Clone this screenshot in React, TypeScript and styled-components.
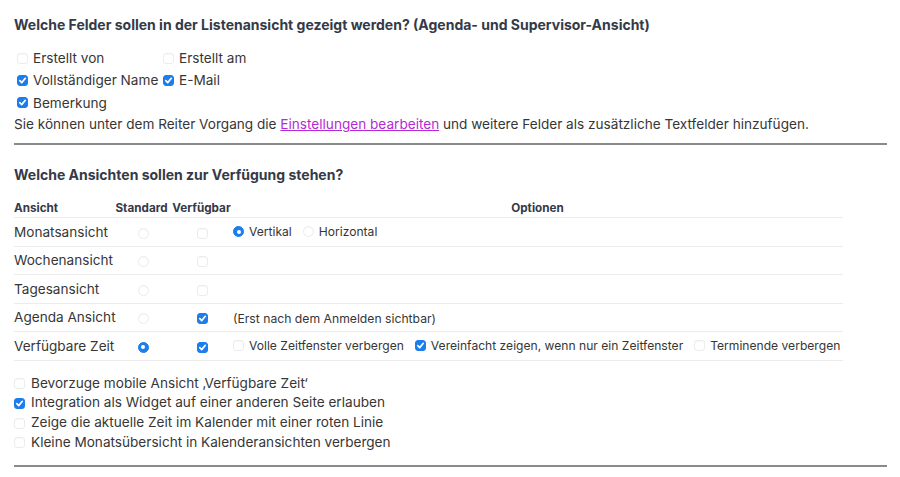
import * as React from 'react';
import styled, { createGlobalStyle } from 'styled-components';

const GlobalStyle = createGlobalStyle`
  html, body {
    margin: 0;
    padding: 0;
    background: #fff;
  }
  body {
    font-family: Inter, 'Liberation Sans', Arial, sans-serif;
    color: #363636;
  }
`;

const Page = styled.div`
  padding: 17px 13px 0 14px;
`;

const Title = styled.h2<{ $spaced?: boolean }>`
  margin: ${(p) => (p.$spaced ? '22px' : '0')} 0 0;
  font-size: 14px;
  line-height: 16px;
  font-weight: 700;
  color: #343a47;
`;

const FieldGrid = styled.div`
  display: grid;
  grid-template-columns: 146px auto;
  justify-content: start;
  margin-top: 14px;
`;

const FieldItem = styled.label`
  display: flex;
  align-items: center;
  font-size: 13.6px;
  line-height: 22.3px;
  white-space: nowrap;
`;

const Hint = styled.p`
  margin: 0;
  font-size: 13.6px;
  line-height: 21.8px;
`;

const Link = styled.a`
  color: #b52ad5;
  text-decoration: underline;
  cursor: pointer;
`;

const Rule = styled.hr`
  margin: 7px 0 0;
  height: 0;
  border: 0;
  border-top: 2px solid #8a8a8a;
`;

const Box = styled.span<{ $checked?: boolean; $round?: boolean; $ml?: number; $mr?: number }>`
  position: relative;
  display: inline-flex;
  align-items: center;
  justify-content: center;
  flex: 0 0 auto;
  box-sizing: border-box;
  width: 11px;
  height: 11px;
  margin: 0 ${(p) => p.$mr ?? 0}px 0 ${(p) => p.$ml ?? 0}px;
  border-radius: ${(p) => (p.$round ? '50%' : '3px')};
  background: ${(p) => (p.$checked ? '#1c7ded' : '#fff')};
  border: 1px solid ${(p) => (p.$checked ? '#1c7ded' : '#ececec')};
  box-shadow: ${(p) => (p.$checked ? 'none' : 'inset 0 1px 1px rgba(0,0,0,0.03)')};
  svg {
    display: block;
  }
  &::after {
    content: '';
    display: ${(p) => (p.$round && p.$checked ? 'block' : 'none')};
    width: 4px;
    height: 4px;
    border-radius: 50%;
    background: #fff;
  }
`;

const Check = ({ on, round, ml, mr }: { on?: boolean; round?: boolean; ml?: number; mr?: number }) => (
  <Box $checked={on} $round={round} $ml={ml} $mr={mr}>
    {on && !round && (
      <svg width='9' height='9' viewBox='0 0 9 9'>
        <polyline points='1.8,4.7 3.7,6.6 7.3,2.3' fill='none' stroke='#fff' strokeWidth='1.7' strokeLinecap='round' strokeLinejoin='round' />
      </svg>
    )}
  </Box>
);

const ViewTable = styled.table`
  margin-top: 16px;
  width: 829px;
  border-collapse: collapse;
  table-layout: fixed;
`;

const HeadCell = styled.th<{ $left?: boolean; $w?: number }>`
  width: ${(p) => (p.$w ? `${p.$w}px` : 'auto')};
  height: 19px;
  padding: 1px 0 0;
  box-sizing: border-box;
  font-size: 11.7px;
  line-height: 16px;
  font-weight: 700;
  color: #343a47;
  text-align: ${(p) => (p.$left ? 'left' : 'center')};
  vertical-align: top;
  border-bottom: 1px solid #ececec;
`;

const Row = styled.tr`
  border-bottom: 1px solid #ececec;
`;

const Cell = styled.td<{ $center?: boolean }>`
  height: 27.5px;
  padding: 0;
  font-size: 13.6px;
  vertical-align: middle;
  text-align: ${(p) => (p.$center ? 'center' : 'left')};
  white-space: nowrap;
  > span {
    vertical-align: middle;
  }
`;

const OptionsCell = styled.td`
  padding: 0;
  vertical-align: middle;
  white-space: nowrap;
`;

const Options = styled.div`
  display: flex;
  align-items: center;
`;

const Option = styled.label`
  display: inline-flex;
  align-items: center;
  margin-right: 10px;
  font-size: 12.1px;
  line-height: 14px;
`;

const Note = styled.span`
  padding-left: 1px;
  font-size: 12.2px;
  line-height: 14px;
`;

const ExtraList = styled.div`
  margin-top: 13px;
  margin-bottom: 12px;
`;

const ExtraItem = styled.label`
  display: flex;
  align-items: center;
  font-size: 13.6px;
  line-height: 19.8px;
`;

interface IView {
  name: string;
  standard: boolean;
  available: boolean;
  options?: React.ReactNode;
}

const views: IView[] = [
  {
    name: 'Monatsansicht',
    standard: false,
    available: false,
    options: (
      <Options>
        <Option>
          <Check round on ml={1} mr={5} />
          Vertikal
        </Option>
        <Option>
          <Check round ml={1} mr={5} />
          Horizontal
        </Option>
      </Options>
    ),
  },
  { name: 'Wochenansicht', standard: false, available: false },
  { name: 'Tagesansicht', standard: false, available: false },
  {
    name: 'Agenda Ansicht',
    standard: false,
    available: true,
    options: <Note>(Erst nach dem Anmelden sichtbar)</Note>,
  },
  {
    name: 'Verfügbare Zeit',
    standard: true,
    available: true,
    options: (
      <Options>
        <Option>
          <Check ml={1} mr={5} />
          Volle Zeitfenster verbergen
        </Option>
        <Option>
          <Check on ml={1} mr={5} />
          Vereinfacht zeigen, wenn nur ein Zeitfenster
        </Option>
        <Option>
          <Check ml={1} mr={5} />
          Terminende verbergen
        </Option>
      </Options>
    ),
  },
];

const extras = [
  { label: 'Bevorzuge mobile Ansicht \u201AVerfügbare Zeit\u2018', on: false },
  { label: 'Integration als Widget auf einer anderen Seite erlauben', on: true },
  { label: 'Zeige die aktuelle Zeit im Kalender mit einer roten Linie', on: false },
  { label: 'Kleine Monatsübersicht in Kalenderansichten verbergen', on: false },
];

const App = () => (
  <Page>
    <GlobalStyle />
    <Title>Welche Felder sollen in der Listenansicht gezeigt werden? (Agenda- und Supervisor-Ansicht)</Title>
    <FieldGrid>
      <FieldItem>
        <Check ml={3} mr={5} />
        Erstellt von
      </FieldItem>
      <FieldItem>
        <Check ml={3} mr={5} />
        Erstellt am
      </FieldItem>
      <FieldItem>
        <Check on ml={3} mr={5} />
        Vollständiger Name
      </FieldItem>
      <FieldItem>
        <Check on ml={3} mr={5} />
        E-Mail
      </FieldItem>
      <FieldItem>
        <Check on ml={3} mr={5} />
        Bemerkung
      </FieldItem>
    </FieldGrid>
    <Hint>
      Sie können unter dem Reiter Vorgang die <Link>Einstellungen bearbeiten</Link> und weitere Felder als zusätzliche
      Textfelder hinzufügen.
    </Hint>
    <Rule />

    <Title $spaced>Welche Ansichten sollen zur Verfügung stehen?</Title>
    <ViewTable>
      <thead>
        <tr>
          <HeadCell $left $w={98}>
            Ansicht
          </HeadCell>
          <HeadCell $w={59}>Standard</HeadCell>
          <HeadCell $w={61}>Verfügbar</HeadCell>
          <HeadCell>Optionen</HeadCell>
        </tr>
      </thead>
      <tbody>
        {views.map((v) => (
          <Row key={v.name}>
            <Cell>{v.name}</Cell>
            <Cell $center>
              <Check round on={v.standard} ml={3} />
            </Cell>
            <Cell $center>
              <Check on={v.available} ml={1} />
            </Cell>
            <OptionsCell>{v.options}</OptionsCell>
          </Row>
        ))}
      </tbody>
    </ViewTable>

    <ExtraList>
      {extras.map((e) => (
        <ExtraItem key={e.label}>
          <Check on={e.on} mr={6} />
          {e.label}
        </ExtraItem>
      ))}
    </ExtraList>
    <Rule />
  </Page>
);

export default App;
